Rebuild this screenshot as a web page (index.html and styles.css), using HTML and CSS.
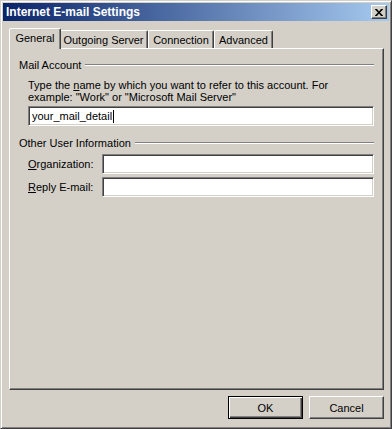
FILE: index.html
```html
<!DOCTYPE html>
<html>
<head>
<meta charset="utf-8">
<link rel="stylesheet" href="styles.css">
</head>
<body>
<div class="window">
  <div class="titlebar">
    <span class="title">Internet E-mail Settings</span>
    <span class="close"><svg width="8" height="7" viewBox="0 0 8 7"><path d="M0 0h2l2 2.5 2-2.5h2v0.5l-3 3 3 3v0.5h-2l-2-2.5-2 2.5h-2v-0.5l3-3-3-3z" fill="#000"/></svg></span>
  </div>
  <div class="body">
    <div class="tabs">
      <div class="tab selected" style="width:48px">General</div>
      <div class="tab" style="width:89px">Outgoing Server</div>
      <div class="tab" style="width:66px">Connection</div>
      <div class="tab" style="width:59px">Advanced</div>
    </div>
    <div class="panel">
      <div class="legend"><span>Mail Account</span><span class="rule"></span></div>
      <p class="desc">Type the <u>n</u>ame by which you want to refer to this account. For<br>example: "Work" or "Microsoft Mail Server"</p>
      <div class="field wide"><span class="val">your_mail_detail</span><span class="caret"></span></div>
      <div class="legend second"><span>Other User Information</span><span class="rule"></span></div>
      <div class="row"><label><u>O</u>rganization:</label><div class="field"></div></div>
      <div class="row"><label><u>R</u>eply E-mail:</label><div class="field"></div></div>
    </div>
    <div class="buttons">
      <div class="btn default"><span>OK</span></div>
      <div class="btn"><span>Cancel</span></div>
    </div>
  </div>
</div>
</body>
</html>
```
FILE: styles.css
```css
* { box-sizing: border-box; }
html, body { margin: 0; padding: 0; background: #d4d0c8; }
body { font-family: "Liberation Sans", Arial, sans-serif; font-size: 11px; color: #000; }
.window {
  width: 392px; height: 429px;
  background: #d4d0c8;
  border: 1px solid;
  border-color: #d4d0c8 #404040 #404040 #d4d0c8;
  box-shadow: inset 1px 1px #fff, inset -1px -1px #808080;
  padding: 2px;
  display: flex; flex-direction: column;
}
.titlebar {
  height: 18px;
  background: linear-gradient(to right, #0a246a, #a6caf0);
  display: flex; align-items: center; justify-content: space-between;
  padding: 0 2px 0 2px;
}
.title { color: #fff; font-weight: bold; font-size: 12px; padding-left: 1px; }
.close {
  width: 16px; height: 14px;
  background: #d4d0c8;
  border: 1px solid; border-color: #fff #404040 #404040 #fff;
  box-shadow: inset -1px -1px #808080;
  display: flex; align-items: center; justify-content: center;
}
.body { padding: 7px 5px 0 6px; display: flex; flex-direction: column; flex: 1; }
.tabs { display: flex; align-items: flex-end; height: 20px; padding-left: 2px; }
.tab {
  height: 18px;
  border: 1px solid; border-bottom: none;
  border-color: #fff #404040 transparent #fff;
  box-shadow: inset -1px 0 #808080;
  border-radius: 2px 2px 0 0;
  display: flex; align-items: center; justify-content: center;
  padding-top: 1px;
  white-space: nowrap;
}
.tab.selected {
  height: 21px; margin: 0 -2px -1px -2px;
  width: 52px !important;
  position: relative; z-index: 1;
  background: #d4d0c8;
  padding-top: 0; padding-bottom: 2px;
}
.panel {
  height: 342px;
  border: 1px solid; border-color: #fff #404040 #404040 #fff;
  box-shadow: inset -1px -1px #808080;
  padding: 9px 9px 0 9px;
}
.legend { display: flex; align-items: center; height: 13px; }
.legend .rule { flex: 1; margin-left: 4px; height: 2px; border-top: 1px solid #808080; border-bottom: 1px solid #fff; }
.legend.second { margin-top: 10px; }
.desc { margin: 8px 0 3px 9px; line-height: 12px; }
.field {
  height: 20px; background: #fff;
  border: 1px solid; border-color: #808080 #fff #fff #808080;
  box-shadow: inset 1px 1px #404040, inset -1px -1px #d4d0c8;
  display: flex; align-items: center; padding-left: 3px;
}
.field.wide { margin-left: 9px; }
.caret { width: 1px; height: 13px; background: #000; margin-left: 1px; }
.row { display: flex; align-items: center; margin-left: 9px; margin-top: 3px; }
.legend.second + .row { margin-top: 5px; }
.row label { width: 74px; }
.row .field { flex: 1; }
.buttons { display: flex; justify-content: flex-end; gap: 6px; margin-top: 6px; }
.btn {
  width: 75px; height: 23px;
  border: 1px solid; border-color: #fff #404040 #404040 #fff;
  box-shadow: inset -1px -1px #808080;
  display: flex; align-items: center; justify-content: center;
}
.btn.default {
  border: 1px solid #000;
  box-shadow: inset 1px 1px #fff, inset -1px -1px #404040, inset -2px -2px #808080;
}
```
